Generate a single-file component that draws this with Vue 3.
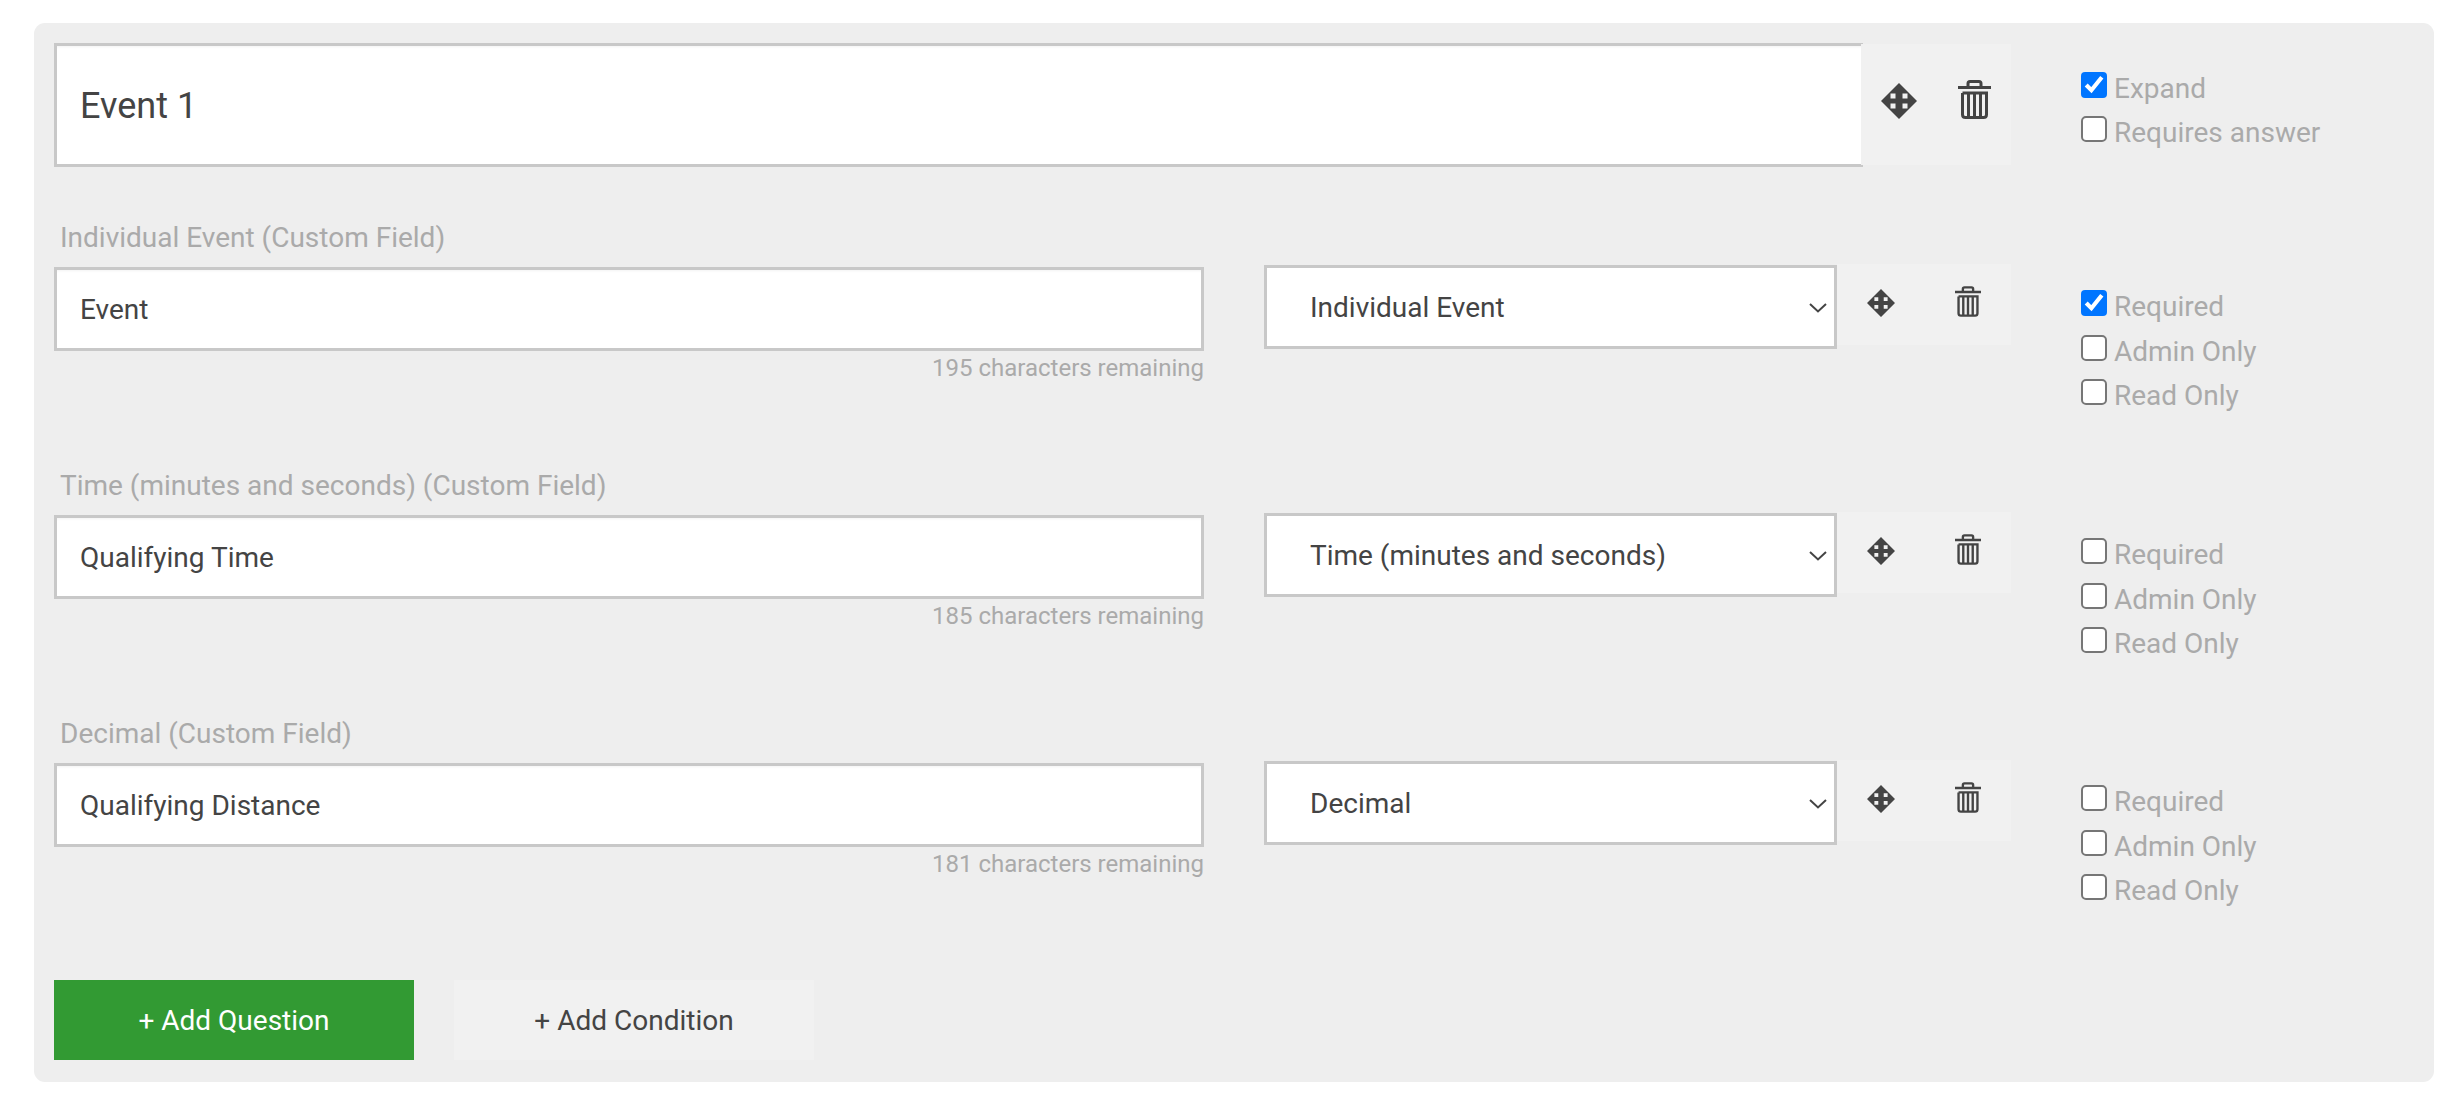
<script setup>
const types = ['Individual Event', 'Time (minutes and seconds)', 'Decimal']
const rows = [
  { label: 'Individual Event (Custom Field)', name: 'Event', type: 'Individual Event', remaining: 195, required: true },
  { label: 'Time (minutes and seconds) (Custom Field)', name: 'Qualifying Time', type: 'Time (minutes and seconds)', remaining: 185, required: false },
  { label: 'Decimal (Custom Field)', name: 'Qualifying Distance', type: 'Decimal', remaining: 181, required: false },
]
</script>

<template>
  <div class="page">
    <section class="panel">
      <div class="title-row">
        <input class="title-input" type="text" value="Event 1" />
        <div class="actions actions-title">
          <svg class="move move-lg" viewBox="0 0 36 36"><path fill-rule="evenodd" d="M18 0L36 18L18 36L0 18ZM9.500 10.500V15.500H14.500V10.500ZM21.500 10.500V15.500H26.500V10.500ZM9.500 20.500V25.500H14.500V20.500ZM21.500 20.500V25.500H26.500V20.500Z" /></svg>
          <svg class="trash trash-lg" viewBox="0 0 33 39">
            <path class="trash-stroke" d="M0 7.500H33M10 6.500V3.500Q10 1.500 12 1.500H21Q23 1.500 23 3.500V6.500M4.500 13V34.500Q4.500 37.500 7.500 37.500H25.500Q28.500 37.500 28.500 34.500V13H4.500M10.500 13V37M16.500 13V37M22.500 13V37" />
          </svg>
        </div>
        <div class="checks checks-title">
          <label class="check"><input type="checkbox" checked /><span>Expand</span></label>
          <label class="check"><input type="checkbox" /><span>Requires answer</span></label>
        </div>
      </div>

      <div v-for="row in rows" :key="row.name" class="row">
        <div class="field">
          <div class="field-label">{{ row.label }}</div>
          <input class="text-input" type="text" :value="row.name" />
          <div class="remaining">{{ row.remaining }} characters remaining</div>
        </div>
        <div class="select-wrap">
          <select class="type-select">
            <option v-for="t in types" :key="t" :selected="t === row.type">{{ t }}</option>
          </select>
          <svg class="chevron" viewBox="0 0 18 10"><path d="M1 1L9 8.500L17 1" /></svg>
        </div>
        <div class="actions actions-row">
          <svg class="move move-sm" viewBox="0 0 36 36"><path fill-rule="evenodd" d="M18 0L36 18L18 36L0 18ZM9.500 10.500V15.500H14.500V10.500ZM21.500 10.500V15.500H26.500V10.500ZM9.500 20.500V25.500H14.500V20.500ZM21.500 20.500V25.500H26.500V20.500Z" /></svg>
          <svg class="trash trash-sm" viewBox="0 0 33 39">
            <path class="trash-stroke" d="M0 7.500H33M10 6.500V3.500Q10 1.500 12 1.500H21Q23 1.500 23 3.500V6.500M4.500 13V34.500Q4.500 37.500 7.500 37.500H25.500Q28.500 37.500 28.500 34.500V13H4.500M10.500 13V37M16.500 13V37M22.500 13V37" />
          </svg>
        </div>
        <div class="checks checks-row">
          <label class="check"><input type="checkbox" :checked="row.required" /><span>Required</span></label>
          <label class="check"><input type="checkbox" /><span>Admin Only</span></label>
          <label class="check"><input type="checkbox" /><span>Read Only</span></label>
        </div>
      </div>

      <div class="buttons">
        <button class="btn btn-primary" type="button">+ Add Question</button>
        <button class="btn btn-secondary" type="button">+ Add Condition</button>
      </div>
    </section>
  </div>
</template>

<style scoped>
.page {
  padding: 23px 19px 0 34px;
  font-family: Roboto, "Liberation Sans", sans-serif;
  color: #444;
}
.panel {
  box-sizing: border-box;
  height: 1059px;
  padding: 20px 0 22px 20px;
  background: #eee;
  border-radius: 11px;
}
input[type="text"], select, button {
  font-family: inherit;
  color: inherit;
  box-sizing: border-box;
  border-radius: 0;
  outline: none;
}
.title-row {
  display: flex;
  height: 124px;
  margin-bottom: 55px;
}
.title-input {
  width: 1809px;
  height: 124px;
  padding: 2px 23px 0;
  border: 3px solid #c8c8c8;
  border-right: 0;
  background: #fff;
  font-size: 36px;
  box-shadow: inset 0 3px 3px -2px rgba(0, 0, 0, 0.05);
}
.actions {
  display: flex;
  background: #f1f1f1;
  position: relative;
}
.actions-title {
  width: 150px;
  height: 121px;
  margin: 1px 0 0 -2px;
}
.move { fill: #444; display: block; }
.trash { display: block; }
.trash-stroke { fill: none; stroke: #444; stroke-width: 3; }
.move-lg { width: 36px; height: 36px; margin: 39px 0 0 20px; }
.trash-lg { width: 33px; height: 39px; margin: 36px 0 0 41px; }
.checks { display: flex; flex-direction: column; }
.checks-title { margin: 29px 0 0 70px; }
.checks-title .check { height: 44px; }
.check {
  display: flex;
  align-items: flex-start;
  height: 44.5px;
  font-size: 28px;
  color: #aaa;
}
.check input {
  zoom: 2;
  width: 13px;
  height: 13px;
  margin: 0 3.5px 0 0;
  flex: none;
}
.check span { line-height: 32px; margin-top: 1px; }
.row {
  display: flex;
  height: 248px;
}
.field { width: 1150px; }
.field-label {
  height: 45px;
  padding-left: 6px;
  font-size: 28px;
  line-height: 32px;
  color: #aaa;
}
.text-input {
  display: block;
  width: 100%;
  height: 84px;
  padding: 0 23px;
  border: 3px solid #c8c8c8;
  background: #fff;
  font-size: 28px;
  box-shadow: inset 0 3px 3px -2px rgba(0, 0, 0, 0.05);
}
.remaining {
  margin-top: 2px;
  text-align: right;
  font-size: 24px;
  line-height: 30px;
  color: #aaa;
}
.select-wrap {
  position: relative;
  width: 573px;
  height: 84px;
  margin: 43px 0 0 60px;
}
.type-select {
  appearance: none;
  display: block;
  width: 100%;
  height: 100%;
  padding: 0 50px 0 43px;
  border: 3px solid #c8c8c8;
  background: #fff;
  font-size: 28px;
}
.chevron {
  position: absolute;
  right: 10px;
  top: 38px;
  width: 18px;
  height: 10px;
  pointer-events: none;
}
.chevron path { fill: none; stroke: #444; stroke-width: 2; }
.actions-row {
  width: 174px;
  height: 81px;
  margin-top: 42px;
}
.move-sm { width: 28px; height: 28px; margin: 25px 0 0 30px; }
.trash-sm { width: 26px; height: 31px; margin: 22px 0 0 60px; }
.checks-row { margin: 68px 0 0 70px; }
.row:nth-of-type(4) .checks-row { margin-top: 67px; }
.buttons {
  display: flex;
  gap: 40px;
  margin-top: 14px;
}
.btn {
  width: 360px;
  height: 80px;
  border: 0;
  font-size: 28px;
}
.btn-primary { background: #329a33; color: #fff; }
.btn-secondary { background: #f1f1f1; color: #444; }
</style>

<style>
html, body { background: #fff; }
</style>
